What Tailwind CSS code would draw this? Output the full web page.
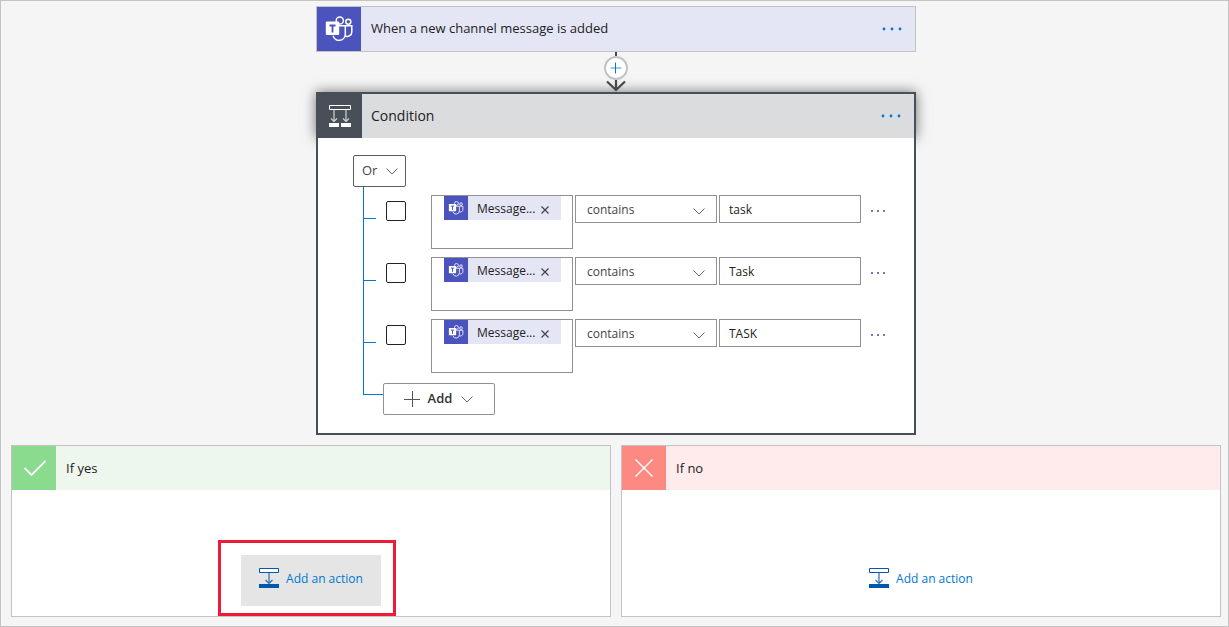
<!DOCTYPE html>
<html lang="en">
<head>
<meta charset="utf-8">
<meta name="viewport" content="width=device-width, initial-scale=1">
<title>Flow designer</title>
<script src="https://cdn.jsdelivr.net/npm/@tailwindcss/browser@4"></script>
</head>
<body class="font-['Open_Sans','Noto_Sans',sans-serif] text-[#222]">
<svg class="hidden" aria-hidden="true">
  <symbol id="teams" viewBox="0 0 28 26">
    <g fill="none" stroke="#fff" stroke-width="1.5">
      <circle cx="14.800" cy="4.500" r="3.600"/>
      <circle cx="23.300" cy="5.800" r="2.500"/>
      <path d="M14 9.700h6.300v8.200a6.200 6.200 0 0 1-12.200 1.800M21 9.700h5.800v6.300a4.500 4.500 0 0 1-6.400 4"/>
    </g>
    <path d="M1.800 5.500h11.400q1 0 1 1v11.400q0 1-1 1H1.800q-1 0-1-1V6.500q0-1 1-1z" fill="#fff"/>
    <path d="M4.500 9.500h6M7.500 9.500v7" fill="none" stroke="#4b53bc" stroke-width="1.800"/>
  </symbol>
  <symbol id="chevron" viewBox="0 0 14 8"><path d="M1.500 1.500 7 7l5.500-5.500" fill="none" stroke="#666"/></symbol>
  <symbol id="dots" viewBox="0 0 20 4"><g fill="#0078d4"><circle cx="2" cy="2" r="1.400"/><circle cx="10" cy="2" r="1.400"/><circle cx="18" cy="2" r="1.400"/></g></symbol>
  <symbol id="smalldots" viewBox="0 0 16 2"><path d="M1 0h2v2H1zM7 0h2v2H7zM13 0h2v2h-2z" fill="#7478bd"/></symbol>
  <symbol id="action" viewBox="0 0 20 20">
    <path d="M.5.500h19v4H.5z" fill="#fff" stroke="#0057ad"/>
    <path d="M10 5v10M6.500 12l3.500 3.500 3.500-3.500" fill="none" stroke="#2e6db0" stroke-width="1.200"/>
    <path d="M0 16h20v4H0z" fill="#0057ad"/>
  </symbol>
</svg>
<main class="flex min-h-screen flex-col border border-[#c3c3c3] bg-[#f5f5f5] pt-[5px] pr-[7px] pb-[9px] pl-[10px]">
  <section class="mx-auto flex w-full max-w-[600px] items-center border border-[#c3c3c3] bg-[#e4e6f5]">
    <span class="flex size-11 items-center justify-center bg-[#4b53bc]"><svg class="h-[26px] w-7"><use href="#teams"/></svg></span>
    <h2 class="ml-[10px] flex-1 text-[13px]">When a new channel message is added</h2>
    <button type="button" aria-label="Trigger menu" class="mr-[13px]"><svg class="h-1 w-5"><use href="#dots"/></svg></button>
  </section>

  <div class="relative z-10 mx-auto flex h-10 flex-col items-center">
    <span class="h-1 w-0.5 bg-[#484848]"></span>
    <button type="button" aria-label="Insert step" class="flex size-6 items-center justify-center rounded-full border-2 border-[#c3c3c3] bg-white">
      <svg class="size-3" viewBox="0 0 12 12"><path d="M.5 6h11" stroke="#5ba8e5" stroke-width="1.200"/><path d="M5.500.5v11" stroke="#0078d4"/></svg>
    </button>
    <svg class="h-3 w-5" viewBox="0 0 20 12"><path d="M10 0v10M1 1.500l9 8.500 9-8.500" fill="none" stroke="#484848" stroke-width="2.200"/></svg>
  </div>

  <section class="mx-auto w-full max-w-[600px]">
    <header class="flex items-center border-2 border-b-0 border-[#484f58] bg-[#dadcde] shadow-[0_0_12px_rgba(0,0,0,0.55)]">
      <span class="flex size-11 items-center justify-center bg-[#484f58]">
        <svg class="h-[22px] w-[22px]" viewBox="0 0 22 22">
          <path d="M.5.500h21v4H.5z" fill="none" stroke="#fff"/>
          <path d="M5 5v12M17 5v12M2 13.500l3 3 3-3M14 13.500l3 3 3-3" fill="none" stroke="#d0d2d5" stroke-width="1.200"/>
          <path d="M0 18h10v4H0zM12 18h10v4H12z" fill="#fff"/>
        </svg>
      </span>
      <h2 class="ml-[9px] flex-1 text-sm">Condition</h2>
      <button type="button" aria-label="Condition menu" class="mr-[13px]"><svg class="h-1 w-5"><use href="#dots"/></svg></button>
    </header>
    <div class="relative border-2 border-t-0 border-[#484f58] bg-white pt-[17px] pb-[18px] pl-[35px]">
      <button type="button" class="flex h-8 items-center gap-2 rounded-xs border border-[#5c5c5c] pr-1.5 pl-2 text-[13px] text-[#444]">Or<svg class="h-2 w-3.5"><use href="#chevron"/></svg></button>
      <div class="ml-[10px] flex flex-col gap-2 border-l border-[#0078d4] pt-2">
        <div class="flex items-start">
          <span class="mt-[23px] h-px w-3 bg-[#0078d4]"></span>
          <input type="checkbox" aria-label="Select row 1" class="mt-1.5 ml-[10px] size-5 appearance-none rounded-xs border border-[#222] bg-white">
          <div class="ml-[25px] h-[54px] w-[142px] border border-[#919191] pl-3">
            <span class="flex h-6 w-[117px] items-center bg-[#e4e6f5] text-xs">
              <span class="flex size-6 items-center justify-center bg-[#4b53bc]"><svg class="h-3.5 w-4"><use href="#teams"/></svg></span>
              <span class="ml-[9px] flex-1 pt-0.5">Message...</span>
              <button type="button" aria-label="Remove token" class="mr-3 mt-1"><svg class="size-2" viewBox="0 0 8 8"><path d="M.5.500l7 7M7.500.5l-7 7" stroke="#444" stroke-width="1.200"/></svg></button>
            </span>
          </div>
          <div class="relative ml-0.5 w-[142px]">
            <select aria-label="Operator 1" class="block h-7 w-full appearance-none border border-[#919191] bg-white pt-0.5 pl-[11px] text-xs text-[#444]"><option>contains</option></select>
            <svg class="pointer-events-none absolute top-3 right-[11px] h-2 w-3.5"><use href="#chevron"/></svg>
          </div>
          <input type="text" aria-label="Value 1" value="task" class="ml-0.5 h-7 w-[142px] border border-[#919191] bg-white px-[9px] text-xs">
          <button type="button" aria-label="Row 1 menu" class="mt-[15px] ml-[9px]"><svg class="block h-0.5 w-4"><use href="#smalldots"/></svg></button>
        </div>
        <div class="flex items-start">
          <span class="mt-[23px] h-px w-3 bg-[#0078d4]"></span>
          <input type="checkbox" aria-label="Select row 2" class="mt-1.5 ml-[10px] size-5 appearance-none rounded-xs border border-[#222] bg-white">
          <div class="ml-[25px] h-[54px] w-[142px] border border-[#919191] pl-3">
            <span class="flex h-6 w-[117px] items-center bg-[#e4e6f5] text-xs">
              <span class="flex size-6 items-center justify-center bg-[#4b53bc]"><svg class="h-3.5 w-4"><use href="#teams"/></svg></span>
              <span class="ml-[9px] flex-1 pt-0.5">Message...</span>
              <button type="button" aria-label="Remove token" class="mr-3 mt-1"><svg class="size-2" viewBox="0 0 8 8"><path d="M.5.500l7 7M7.500.5l-7 7" stroke="#444" stroke-width="1.200"/></svg></button>
            </span>
          </div>
          <div class="relative ml-0.5 w-[142px]">
            <select aria-label="Operator 2" class="block h-7 w-full appearance-none border border-[#919191] bg-white pt-0.5 pl-[11px] text-xs text-[#444]"><option>contains</option></select>
            <svg class="pointer-events-none absolute top-3 right-[11px] h-2 w-3.5"><use href="#chevron"/></svg>
          </div>
          <input type="text" aria-label="Value 2" value="Task" class="ml-0.5 h-7 w-[142px] border border-[#919191] bg-white px-[9px] text-xs">
          <button type="button" aria-label="Row 2 menu" class="mt-[15px] ml-[9px]"><svg class="block h-0.5 w-4"><use href="#smalldots"/></svg></button>
        </div>
        <div class="flex items-start">
          <span class="mt-[23px] h-px w-3 bg-[#0078d4]"></span>
          <input type="checkbox" aria-label="Select row 3" class="mt-1.5 ml-[10px] size-5 appearance-none rounded-xs border border-[#222] bg-white">
          <div class="ml-[25px] h-[54px] w-[142px] border border-[#919191] pl-3">
            <span class="flex h-6 w-[117px] items-center bg-[#e4e6f5] text-xs">
              <span class="flex size-6 items-center justify-center bg-[#4b53bc]"><svg class="h-3.5 w-4"><use href="#teams"/></svg></span>
              <span class="ml-[9px] flex-1 pt-0.5">Message...</span>
              <button type="button" aria-label="Remove token" class="mr-3 mt-1"><svg class="size-2" viewBox="0 0 8 8"><path d="M.5.500l7 7M7.500.5l-7 7" stroke="#444" stroke-width="1.200"/></svg></button>
            </span>
          </div>
          <div class="relative ml-0.5 w-[142px]">
            <select aria-label="Operator 3" class="block h-7 w-full appearance-none border border-[#919191] bg-white pt-0.5 pl-[11px] text-xs text-[#444]"><option>contains</option></select>
            <svg class="pointer-events-none absolute top-3 right-[11px] h-2 w-3.5"><use href="#chevron"/></svg>
          </div>
          <input type="text" aria-label="Value 3" value="TASK" class="ml-0.5 h-7 w-[142px] border border-[#919191] bg-white px-[9px] text-xs">
          <button type="button" aria-label="Row 3 menu" class="mt-[15px] ml-[9px]"><svg class="block h-0.5 w-4"><use href="#smalldots"/></svg></button>
        </div>
      </div>
      <div class="ml-[10px] flex items-start">
        <span class="h-[22px] w-5 border-b border-l border-[#0078d4]"></span>
        <button type="button" class="mt-[10px] flex h-8 w-28 items-center justify-center gap-2 rounded-xs border border-[#919191] text-[13px] font-semibold text-[#333]">
          <svg class="size-4" viewBox="0 0 16 16"><path d="M0 8.500h16M8.500 0v16" stroke="#555"/></svg>Add<svg class="h-2 w-3.5"><use href="#chevron"/></svg>
        </button>
      </div>
    </div>
  </section>

  <div class="mt-[10px] grid flex-1 grid-cols-2 gap-[10px]">
    <section class="flex flex-col border border-[#c3c3c3] bg-white">
      <header class="flex items-center bg-[#edf7ee]">
        <span class="flex size-11 items-center justify-center bg-[#8adb8d] pl-0.5"><svg class="h-4 w-[22px]" viewBox="0 0 22 16"><path d="M.5 8 7.500 15 21.500 1" fill="none" stroke="#fff" stroke-width="1.800"/></svg></span>
        <h2 class="ml-[10px] pt-0.5 text-[13px]">If yes</h2>
      </header>
      <div class="flex flex-1 items-end justify-center pr-2">
        <div class="border-3 border-[#ee1a37] pt-3 pr-3 pb-[7px] pl-5">
          <button type="button" class="flex h-[51px] w-[140px] items-center justify-center gap-[7px] bg-[#e5e5e5] pb-1.5 text-xs text-[#0078d4]"><svg class="size-5"><use href="#action"/></svg><span class="pt-0.5">Add an action</span></button>
        </div>
      </div>
    </section>
    <section class="flex flex-col border border-[#c3c3c3] bg-white">
      <header class="flex items-center bg-[#ffebeb]">
        <span class="flex size-11 items-center justify-center bg-[#fd8a82]"><svg class="size-[18px]" viewBox="0 0 18 18"><path d="M.5.500l17 17M17.500.5l-17 17" stroke="#fff" stroke-width="1.400"/></svg></span>
        <h2 class="ml-[10px] pt-0.5 text-[13px]">If no</h2>
      </header>
      <div class="flex flex-1 items-end justify-center pb-[10px]">
        <button type="button" class="flex h-[51px] w-[140px] items-center justify-center gap-[7px] pb-1.5 text-xs text-[#0078d4]"><svg class="size-5"><use href="#action"/></svg><span class="pt-0.5">Add an action</span></button>
      </div>
    </section>
  </div>
</main>
</body>
</html>
